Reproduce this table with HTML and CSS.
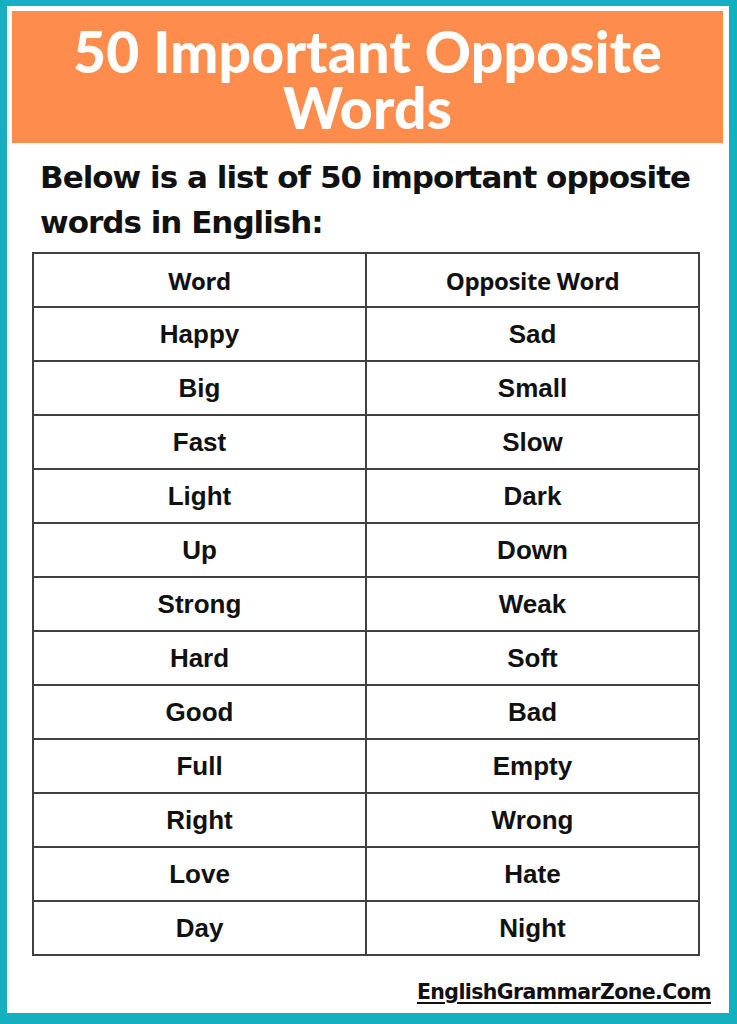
FILE: index.html
```html
<!DOCTYPE html>
<html lang="en">
<head>
<meta charset="utf-8">
<title>50 Important Opposite Words</title>
<link rel="stylesheet" href="styles.css">
</head>
<body>
<div class="frame">
  <header class="banner">
    <h1>50 Important Opposite<br>Words</h1>
  </header>
  <p class="intro"><span class="line1">Below is a list of 50 important opposite</span><span class="line2">words in English:</span></p>
  <table class="words">
    <thead>
      <tr><th>Word</th><th>Opposite Word</th></tr>
    </thead>
    <tbody>
      <tr><td>Happy</td><td>Sad</td></tr>
      <tr><td>Big</td><td>Small</td></tr>
      <tr><td>Fast</td><td>Slow</td></tr>
      <tr><td>Light</td><td>Dark</td></tr>
      <tr><td>Up</td><td>Down</td></tr>
      <tr><td>Strong</td><td>Weak</td></tr>
      <tr><td>Hard</td><td>Soft</td></tr>
      <tr><td>Good</td><td>Bad</td></tr>
      <tr><td>Full</td><td>Empty</td></tr>
      <tr><td>Right</td><td>Wrong</td></tr>
      <tr><td>Love</td><td>Hate</td></tr>
      <tr><td>Day</td><td>Night</td></tr>
    </tbody>
  </table>
  <footer class="site"><span>EnglishGrammarZone.Com</span></footer>
</div>
</body>
</html>
```
FILE: styles.css
```css
html, body {
  margin: 0;
  padding: 0;
  background: #ffffff;
}
.frame {
  box-sizing: border-box;
  width: 737px;
  height: 1024px;
  border-style: solid;
  border-color: #14b0bf;
  border-width: 6px 8px 11px 7px;
  padding: 5px 6px 0 5px;
  background: #ffffff;
  display: flex;
  flex-direction: column;
}
.banner {
  background: #fe8d4d;
  height: 132px;
  display: flex;
  align-items: center;
  justify-content: center;
}
.banner h1 {
  margin: 4px 0 0 0;
  color: #ffffff;
  font-family: Lato, "Open Sans", sans-serif;
  font-weight: 900;
  font-size: 57px;
  line-height: 56px;
  text-align: center;
  letter-spacing: 0.2px;
}
.intro {
  margin: 12px 0 0 28px;
  width: 650px;
  font-family: "DejaVu Sans", sans-serif;
  font-weight: bold;
  font-size: 31px;
  line-height: 45px;
  color: #111111;
  letter-spacing: -1px;
}
.intro .line1 {
  display: block;
  text-align: justify;
  text-align-last: justify;
}
.intro .line2 {
  display: block;
}
.words {
  margin: 7px 0 0 20px;
  width: 668px;
  border-collapse: collapse;
  table-layout: fixed;
  font-family: "Liberation Sans", Arial, sans-serif;
  font-weight: bold;
  color: #111111;
}
.words th, .words td {
  border: 2px solid #404040;
  height: 52px;
  padding: 0;
  text-align: center;
  vertical-align: middle;
  font-size: 26px;
}
.words th {
  font-family: "Open Sans", sans-serif;
  font-weight: 700;
  font-size: 24px;
  letter-spacing: -0.4px;
}
.site {
  margin-top: 24px;
  padding-right: 12px;
  display: flex;
  justify-content: flex-end;
}
.site span {
  font-family: "DejaVu Sans", sans-serif;
  font-weight: bold;
  font-size: 20.5px;
  letter-spacing: -0.6px;
  color: #111111;
  text-decoration: underline;
  text-decoration-thickness: 2px;
  text-underline-offset: 3px;
}
```
